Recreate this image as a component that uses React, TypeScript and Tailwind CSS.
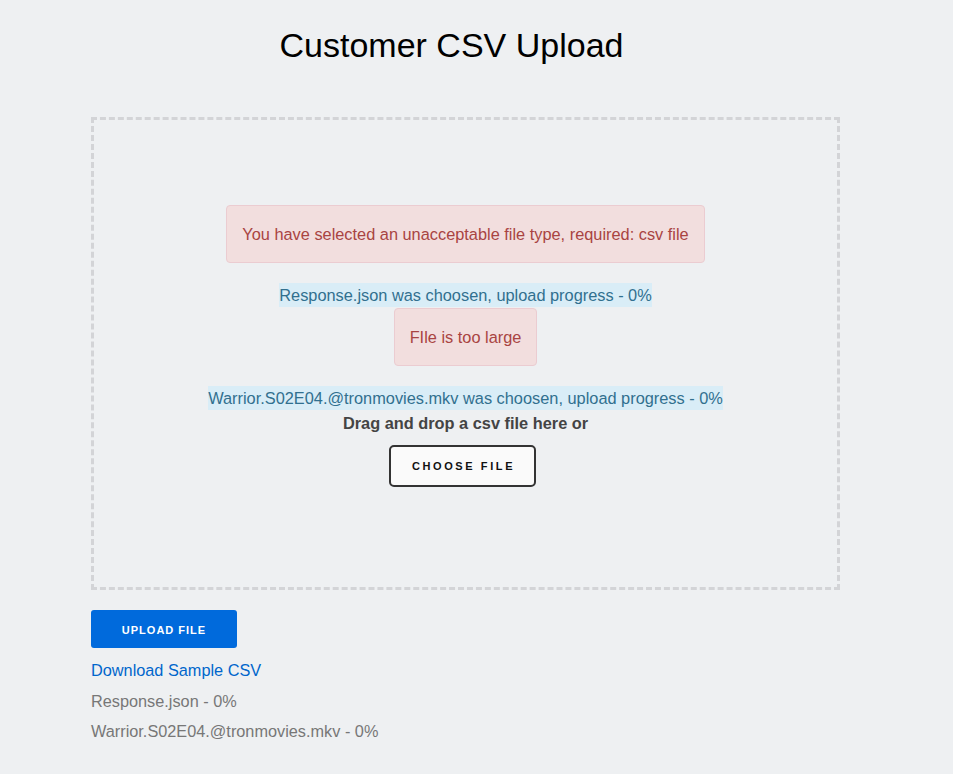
import React from "react";

export default function App() {
  return (
    <div className="min-h-[774px] w-full bg-[#eef0f2] font-['Liberation_Sans',Arial,sans-serif]">
      <h1 className="m-0 w-[903px] pt-[23px] text-center text-[34px] font-normal leading-[44px] text-black">
        Customer CSV Upload
      </h1>
      <div className="ml-[91px] mt-[50px] flex h-[473px] w-[749px] flex-col items-center border-[3px] border-dashed border-[#d3d4d7] pt-[85px] text-[16.35px]">
        <div className="mb-[20px] rounded-[4px] border border-[#ebccd1] bg-[#f2dede] px-[15px] py-[15px] leading-[26px] text-[#a94442]">
          You have selected an unacceptable file type, required: csv file
        </div>
        <span className="bg-[#d9edf7] leading-[24px] text-[#31708f]">
          Response.json was choosen, upload progress - 0%
        </span>
        <div className="mb-[20px] mt-[1px] rounded-[4px] border border-[#ebccd1] bg-[#f2dede] px-[15px] py-[15px] leading-[26px] text-[#a94442]">
          FIle is too large
        </div>
        <span className="bg-[#d9edf7] leading-[24px] text-[#31708f]">
          Warrior.S02E04.@tronmovies.mkv was choosen, upload progress - 0%
        </span>
        <div className="mt-[2px] font-bold leading-[22px] text-[#444]">
          Drag and drop a csv file here or
        </div>
        <button className="mr-[6px] mt-[11px] h-[42px] w-[147px] rounded-[5px] border-2 border-[#333] bg-[#fafafa] pl-[2px] text-[11px] font-bold tracking-[2.6px] text-[#111]">
          CHOOSE FILE
        </button>
      </div>
      <div className="ml-[91px] mt-[20px] flex flex-col items-start text-[16.3px]">
        <button className="h-[38px] w-[146px] rounded-[3px] bg-[#006adc] pt-[2px] text-[11px] font-bold tracking-[1px] text-white">
          UPLOAD FILE
        </button>
        <a className="mt-[11px] leading-[22px] text-[#0066cc]">Download Sample CSV</a>
        <div className="mt-[9px] leading-[22px] text-[#777]">Response.json - 0%</div>
        <div className="mt-[8px] leading-[22px] text-[#777]">Warrior.S02E04.@tronmovies.mkv - 0%</div>
      </div>
    </div>
  );
}
